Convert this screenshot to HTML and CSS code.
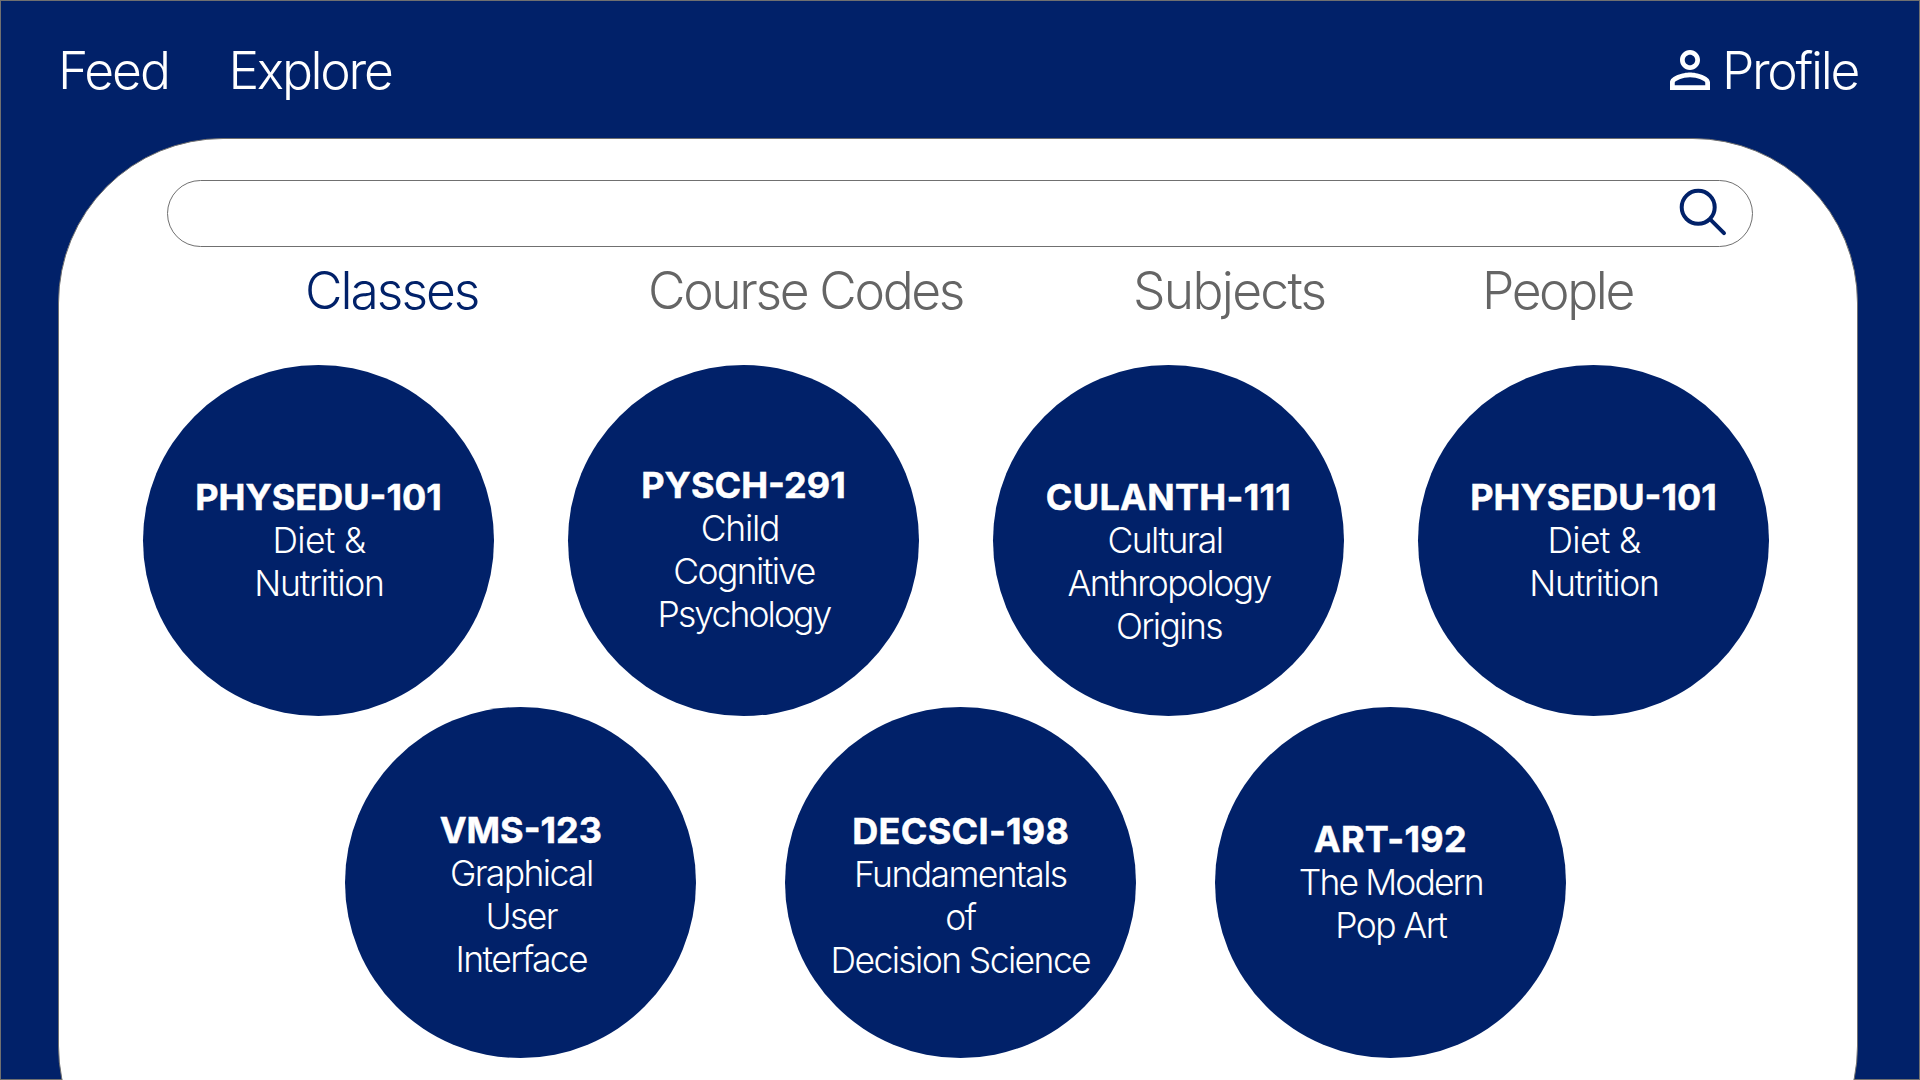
FILE: index.html
```
<!DOCTYPE html>
<html lang="en">
<head>
  <meta charset="utf-8">
  <title>Explore</title>
  <link rel="stylesheet" href="styles.css">
</head>
<body>
  <div class="page">
    <header class="topbar">
      <nav class="nav">
        <a class="link feed">Feed</a>
        <a class="link explore">Explore</a>
      </nav>
      <a class="profile">
        <svg class="person" viewBox="4 4 16 16" aria-hidden="true"><path d="M12 5.9c1.16 0 2.1.94 2.1 2.1s-.94 2.1-2.1 2.1S9.9 9.16 9.9 8s.94-2.1 2.1-2.1m0 9c2.97 0 6.1 1.46 6.1 2.1v1.1H5.9V17c0-.64 3.13-2.1 6.1-2.1M12 4C9.79 4 8 5.79 8 8s1.79 4 4 4 4-1.79 4-4-1.79-4-4-4zm0 9c-2.67 0-8 1.34-8 4v3h16v-3c0-2.66-5.33-4-8-4z"/></svg>
        <span class="link profile-label">Profile</span>
      </a>
    </header>

    <main class="panel">
      <div class="search">
        <svg class="magnifier" viewBox="0 0 50 50" aria-hidden="true"><circle cx="20.2" cy="20.3" r="16.5"/><path d="M32.2 32.4 46 46.2"/></svg>
      </div>

      <nav class="tabs">
        <a class="link tab classes active">Classes</a>
        <a class="link tab codes">Course Codes</a>
        <a class="link tab subjects">Subjects</a>
        <a class="link tab people">People</a>
      </nav>

      <section class="row row-top">
        <article class="course">
          <h2 class="code">PHYSEDU-101</h2>
          <p class="line loose">Diet &amp;</p>
          <p class="line snug">Nutrition</p>
        </article>
        <article class="course raised">
          <h2 class="code">PYSCH-291</h2>
          <p class="line snug trailing">Child</p>
          <p class="line">Cognitive</p>
          <p class="line tight">Psychology</p>
        </article>
        <article class="course">
          <h2 class="code wide">CULANTH-111</h2>
          <p class="line trailing">Cultural</p>
          <p class="line">Anthropology</p>
          <p class="line">Origins</p>
        </article>
        <article class="course">
          <h2 class="code">PHYSEDU-101</h2>
          <p class="line loose">Diet &amp;</p>
          <p class="line snug">Nutrition</p>
        </article>
      </section>

      <section class="row row-bottom">
        <article class="course vms">
          <h2 class="code">VMS-123</h2>
          <p class="line">Graphical</p>
          <p class="line">User</p>
          <p class="line">Interface</p>
        </article>
        <article class="course decsci">
          <h2 class="code wide">DECSCI-198</h2>
          <p class="line">Fundamentals</p>
          <p class="line">of</p>
          <p class="line">Decision Science</p>
        </article>
        <article class="course">
          <h2 class="code wide">ART-192</h2>
          <p class="line tight">The Modern</p>
          <p class="line">Pop Art</p>
        </article>
      </section>
    </main>
  </div>
</body>
</html>
```
FILE: styles.css
```
* {
  box-sizing: border-box;
  margin: 0;
  padding: 0;
}

body {
  font-family: Inter, "Liberation Sans", sans-serif;
  overflow: hidden;
}

.page {
  width: 1920px;
  height: 1080px;
  overflow: hidden;
  background: #012169;
  box-shadow: inset 0 0 0 1px #707070;
}

.link {
  font-size: 51.5px;
  font-weight: 300;
  line-height: 62px;
  white-space: nowrap;
}

/* Top bar */
.topbar {
  display: flex;
  justify-content: space-between;
  height: 138px;
  padding: 39px 62px 0 58px;
  color: #fff;
}

.nav {
  display: grid;
  grid-template-columns: 170.5px auto;
}

.feed { letter-spacing: -2px; }
.explore { letter-spacing: -2.3px; }

.profile {
  display: flex;
  gap: 12px;
}

.person {
  width: 40px;
  height: 40px;
  margin-top: 11px;
  fill: #fff;
}

.profile-label { letter-spacing: -2.3px; }

/* White panel, running past the bottom of the page */
.panel {
  width: 1800px;
  height: 1073px;
  margin-left: 58px;
  padding-top: 41px;
  background: #fff;
  border: 1px solid #707070;
  border-radius: 165px;
}

.search {
  display: flex;
  justify-content: flex-end;
  width: 1586px;
  height: 67px;
  margin-left: 108px;
  padding: 6px 24px 0 0;
  border: 1px solid #707070;
  border-radius: 34px;
}

.magnifier {
  width: 50px;
  height: 50px;
  fill: none;
  stroke: #012169;
  stroke-width: 4;
  stroke-linecap: round;
}

.tabs {
  display: grid;
  grid-template-columns: 343px 485px 349px auto;
  margin-top: 12px;
  padding-left: 246px;
}

.tab { color: #656565; }
.tab.active { color: #012169; }
.classes { letter-spacing: -2px; }
.codes { letter-spacing: -2.35px; }
.subjects { letter-spacing: -1.7px; }
.people { letter-spacing: -2.4px; }

/* Course circles */
.row { display: grid; }

.row-top {
  grid-template-columns: repeat(4, 425px);
  margin-top: 44px;
  padding-left: 84px;
}

.row-bottom {
  grid-template-columns: 440px 429.5px 351px;
  margin-top: -9px;
  padding-left: 286.3px;
}

.course {
  width: 351px;
  height: 351px;
  padding-top: 111px;
  border-radius: 50%;
  background: #012169;
  color: #fff;
  text-align: center;
}

.raised { padding-top: 99px; }
.vms { padding-top: 102px; }
.decsci { padding-top: 103px; }

.code {
  font-size: 36px;
  font-weight: 700;
  line-height: 43px;
  -webkit-text-stroke: 0.5px #fff;
}

.wide { letter-spacing: 0.3px; }

.line {
  font-size: 35.5px;
  font-weight: 300;
  line-height: 43px;
  letter-spacing: -1.6px;
  text-indent: 1px;
}

.decsci .line { text-indent: -1px; }

.loose { letter-spacing: -0.7px; }
.snug { letter-spacing: -1.25px; }
.tight { letter-spacing: -1.9px; }
.trailing { padding-right: 8px; }
```
